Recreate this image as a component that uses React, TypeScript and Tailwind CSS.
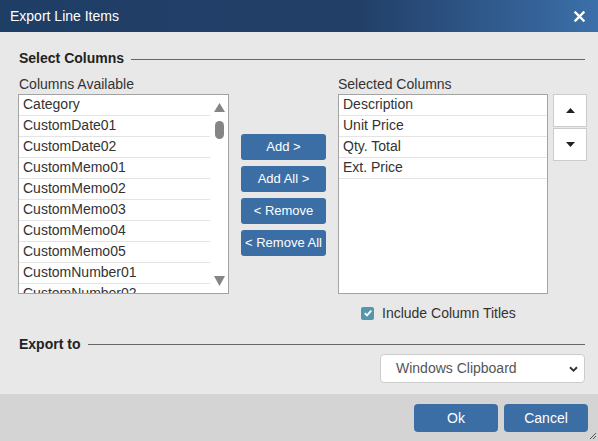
import React from "react";

const available = [
  "Category",
  "CustomDate01",
  "CustomDate02",
  "CustomMemo01",
  "CustomMemo02",
  "CustomMemo03",
  "CustomMemo04",
  "CustomMemo05",
  "CustomNumber01",
  "CustomNumber02",
];

const selected = ["Description", "Unit Price", "Qty. Total", "Ext. Price"];

function Row({ text }: { text: string }) {
  return (
    <div className="h-[21px] shrink-0 border-b border-[#e4e4e4] pl-[4px] text-[14px] leading-[18px] text-[#333] whitespace-nowrap">
      {text}
    </div>
  );
}

function MidButton({ label }: { label: string }) {
  return (
    <button className="w-[85px] h-[26px] rounded-[3px] bg-[#3b6ea5] text-white text-[13px] leading-[26px] text-center">
      {label}
    </button>
  );
}

export default function App() {
  return (
    <div className="w-[598px] h-[441px] flex flex-col bg-[#e8e8e8] font-['Liberation_Sans',Arial,sans-serif] text-[#333] overflow-hidden">
      {/* Header */}
      <div className="h-[32px] shrink-0 flex items-center justify-between pl-[10px] pr-[13px] bg-gradient-to-r from-[#1f3e66] via-[#223f68] via-60% to-[#3c70aa]">
        <span className="text-white text-[14px] leading-[16px]">Export Line Items</span>
        <svg width="11" height="11" viewBox="0 0 11 11">
          <path d="M1.5 1.5 L9.5 9.5 M9.5 1.5 L1.5 9.5" stroke="white" strokeWidth="2.4" strokeLinecap="square" />
        </svg>
      </div>

      {/* Body */}
      <div className="flex-1 flex flex-col pl-[18px] pr-[11px] pt-[18px]">
        <div className="h-[16px] flex items-center pl-px">
          <span className="font-bold text-[14px] leading-[16px] text-[#222]">Select Columns</span>
          <div className="flex-1 h-px bg-[#666] ml-[7px] mr-[2px] mt-[2px]" />
        </div>

        <div className="flex mt-[10px]">
          {/* Left column */}
          <div className="w-[211px] flex flex-col">
            <div className="h-[16px] text-[14px] leading-[16px] pl-px mb-[2px]">Columns Available</div>
            <div className="h-[200px] border border-[#a3a3a3] bg-white flex overflow-hidden">
              <div className="w-[191px] flex flex-col">
                {available.map((t) => (
                  <Row key={t} text={t} />
                ))}
              </div>
              <div className="flex-1 flex flex-col items-center pt-[8px] pb-[7px]">
                <svg width="11" height="9" viewBox="0 0 11 9">
                  <path d="M5.5 0 L11 9 L0 9 Z" fill="#858585" />
                </svg>
                <div className="w-[9px] h-[18px] rounded-full bg-[#858585] mt-[9px]" />
                <div className="flex-1" />
                <svg width="11" height="10" viewBox="0 0 11 10">
                  <path d="M0 0 L11 0 L5.5 10 Z" fill="#858585" />
                </svg>
              </div>
            </div>
          </div>

          {/* Middle buttons */}
          <div className="ml-[12px] pt-[58px] flex flex-col gap-[6px]">
            <MidButton label="Add >" />
            <MidButton label="Add All >" />
            <MidButton label="< Remove" />
            <MidButton label="< Remove All" />
          </div>

          {/* Right column */}
          <div className="ml-[12px] w-[210px] flex flex-col">
            <div className="h-[16px] text-[14px] leading-[16px] mb-[2px]">Selected Columns</div>
            <div className="h-[200px] border border-[#a3a3a3] bg-white flex flex-col overflow-hidden">
              {selected.map((t) => (
                <Row key={t} text={t} />
              ))}
            </div>
            <div className="h-[16px] mt-[11px] flex items-center pl-[23px]">
              <div className="w-[13px] h-[13px] rounded-[2px] bg-[#5596ad] flex items-center justify-center">
                <svg width="10" height="10" viewBox="0 0 10 10">
                  <path d="M1.8 5.2 L4 7.4 L8.3 2.6" stroke="white" strokeWidth="1.8" fill="none" />
                </svg>
              </div>
              <span className="ml-[8px] text-[14px] leading-[16px]">Include Column Titles</span>
            </div>
          </div>

          {/* Up / Down */}
          <div className="ml-[5px] pt-[18px] flex flex-col gap-px">
            <div className="w-[34px] h-[33px] border border-[#cccccc] bg-white flex items-center justify-center">
              <svg width="9" height="5" viewBox="0 0 9 5">
                <path d="M4.5 0 L9 5 L0 5 Z" fill="#222" />
              </svg>
            </div>
            <div className="w-[34px] h-[33px] border border-[#cccccc] bg-white flex items-center justify-center">
              <svg width="9" height="5" viewBox="0 0 9 5">
                <path d="M0 0 L9 0 L4.5 5 Z" fill="#222" />
              </svg>
            </div>
          </div>
        </div>

        <div className="h-[16px] mt-[15px] flex items-center pl-px">
          <span className="font-bold text-[14px] leading-[16px] text-[#222]">Export to</span>
          <div className="flex-1 h-px bg-[#666] ml-[8px] mr-[2px] mt-[1px]" />
        </div>

        <div className="flex justify-end mt-[2px] mr-[2px]">
          <div className="w-[205px] h-[29px] border border-[#cccccc] rounded-[4px] bg-white flex items-center pl-[15px] pr-[6px]">
            <span className="flex-1 text-[14px] text-[#555]">Windows Clipboard</span>
            <svg width="9" height="6" viewBox="0 0 9 6">
              <path d="M1 1.2 L4.5 4.6 L8 1.2" stroke="#333" strokeWidth="1.9" fill="none" />
            </svg>
          </div>
        </div>
      </div>

      {/* Footer */}
      <div className="h-[47px] shrink-0 bg-[#d4d4d4] flex justify-end items-start pt-[10px] pr-[10px] gap-[6px] relative">
        <button className="w-[84px] h-[28px] rounded-[4px] bg-[#3b6ea5] text-white text-[14px]">Ok</button>
        <button className="w-[84px] h-[28px] rounded-[4px] bg-[#3b6ea5] text-white text-[14px]">Cancel</button>
        <svg className="absolute right-[1px] bottom-[1px]" width="8" height="8" viewBox="0 0 8 8">
          <path d="M7 1 L1 7 M7 4 L4 7" stroke="#555" strokeWidth="1" />
        </svg>
      </div>
    </div>
  );
}
